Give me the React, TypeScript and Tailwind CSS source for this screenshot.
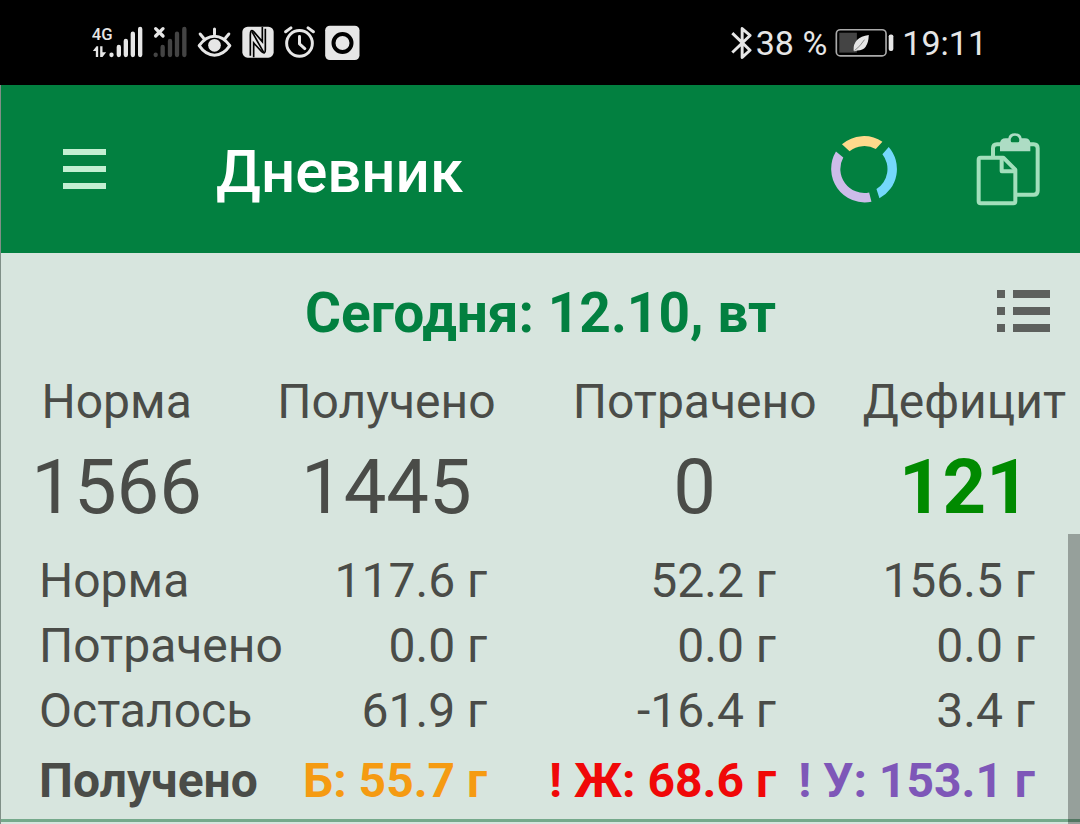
import type { ReactNode } from 'react';

const summary = [
  { label: 'Норма', value: '1566' },
  { label: 'Получено', value: '1445' },
  { label: 'Потрачено', value: '0' },
  { label: 'Дефицит', value: '121', highlight: true },
];

const rows = [
  { label: 'Норма', values: ['117.6 г', '52.2 г', '156.5 г'] },
  { label: 'Потрачено', values: ['0.0 г', '0.0 г', '0.0 г'] },
  { label: 'Осталось', values: ['61.9 г', '-16.4 г', '3.4 г'] },
];

export default function App() {
  return (
    <div className="flex min-h-screen flex-col bg-[#d7e5de] font-['Roboto',sans-serif] text-[#4a4c48]">
      <StatusBar />
      <div className="relative flex flex-1 flex-col border-l border-[#7f8f87]">
        <TopBar />
        <main className="flex-1">
          <div className="grid h-[120px] grid-cols-[1fr_auto_1fr] items-center">
            <h2 className="col-start-2 text-[55px] leading-none font-bold text-[#028040]">Сегодня: 12.10, вт</h2>
            <button type="button" aria-label="Список" className="mr-[30px] justify-self-end pb-1">
              <ListIcon />
            </button>
          </div>
          <Summary />
          <Nutrients />
        </main>
        {/* scroll thumb */}
        <div className="absolute top-[449px] right-0 bottom-0 w-3 bg-black/30" />
      </div>
    </div>
  );
}

function StatusBar() {
  return (
    <div className="flex h-[85px] items-center justify-between bg-black pr-[93px] pl-[92px] text-[34px] text-[#e6e6e6]">
      <div className="flex items-center gap-[10px]">
        <StatusIcon viewBox="38 30 152 108" className="w-[51px]">
          <text x="37" y="76" fontSize="50" fontWeight="500">4G</text>
          <path d="M40 108L51 94H56V126H49V108ZM62 94H69V112H80L69 126H62Z" />
          <path d="M96 119V120M118 96V120M139 78V120M160 56V120M182 42V120" stroke="currentColor" strokeWidth="13" strokeLinecap="round" />
        </StatusIcon>
        <StatusIcon viewBox="220 30 102 108" className="w-[34px]">
          <path d="M228 41L250 63M250 41L228 63" stroke="currentColor" strokeWidth="10" strokeLinecap="round" />
          <path d="M228 119V120M249 96V120M271 78V120M292 56V120M314 42V120" stroke="#444" strokeWidth="13" strokeLinecap="round" />
        </StatusIcon>
        <StatusIcon viewBox="353 30 104 108" className="w-[35px]">
          <g fill="none" stroke="currentColor" strokeWidth="9" strokeLinecap="round" strokeLinejoin="round">
            <path d="M359 92C385 54 425 54 451 92C425 130 385 130 359 92ZM405 42V58M362 57L372 69M448 57L438 69" />
          </g>
          <circle cx="405" cy="91" r="19" />
        </StatusIcon>
        <StatusIcon viewBox="487 30 96 108" className="w-[32px]">
          <rect x="488" y="35" width="94" height="93" rx="16" />
          <g fill="none" stroke="#000">
            <path d="M512 122V60Q512 40 522 50L548 80V36" strokeWidth="5" />
            <path d="M557 41V104Q557 120 546 110L522 84V127" strokeWidth="5" />
            <path d="M517 50L552 112" strokeWidth="5" />
          </g>
        </StatusIcon>
        <StatusIcon viewBox="613 30 94 108" className="w-[31px]">
          <g fill="none" stroke="currentColor" strokeWidth="9" strokeLinecap="round" strokeLinejoin="round">
            <circle cx="660" cy="85" r="39" />
            <path d="M660 64V87L676 101M618 50L634 38M702 50L686 38" />
          </g>
        </StatusIcon>
        <StatusIcon viewBox="735 30 104 108" className="w-[35px]">
          <rect x="735" y="32" width="103" height="103" rx="14" />
          <circle cx="787" cy="84" r="27" fill="none" stroke="#000" strokeWidth="12" />
        </StatusIcon>
      </div>
      <div className="flex items-center">
        <StatusIcon viewBox="34 27 64 108" className="w-[21px]">
          <path d="M38 51L92 103L68 125V37L92 58L38 110" fill="none" stroke="currentColor" strokeWidth="9" strokeLinejoin="round" />
        </StatusIcon>
        <span className="ml-1 pt-[2px]">38 %</span>
        <StatusIcon viewBox="350 29 178 108" className="ml-2 w-[59px]">
          <rect x="354" y="43" width="150" height="79" rx="12" fill="none" stroke="#aaa" strokeWidth="5" />
          <rect x="363" y="52" width="53" height="60" fill="#444" />
          <path d="M406 106Q404 66 452 59Q450 106 418 106L409 108Z" />
          <path d="M409 106Q426 93 439 73" fill="none" stroke="#888" strokeWidth="3" />
          <rect x="512" y="57" width="14" height="50" rx="6" />
        </StatusIcon>
        <span className="ml-2 pt-[2px]">19:11</span>
      </div>
    </div>
  );
}

function StatusIcon({ viewBox, className, children }: { viewBox: string; className: string; children: ReactNode }) {
  return (
    <svg viewBox={viewBox} className={`h-9 shrink-0 ${className}`} fill="currentColor" aria-hidden="true">
      {children}
    </svg>
  );
}

function TopBar() {
  return (
    <header className="flex h-[168px] items-center bg-[#028040] pr-10 pl-[62px]">
      <button type="button" aria-label="Меню" className="flex w-[43px] flex-col gap-[11px]">
        <span className="h-[6px] bg-[#c3efd2]" />
        <span className="h-[6px] bg-[#c3efd2]" />
        <span className="h-[6px] bg-[#c3efd2]" />
      </button>
      <h1 className="ml-[110px] flex-1 pt-[5px] text-[60px] font-medium text-white">Дневник</h1>
      <button type="button" aria-label="Диаграмма">
        <svg viewBox="30 44 208 208" className="size-[69px]">
          <path d="M66 72A101 101 0 0 1 188 64L168 86A72 72 0 0 0 89 93Z" fill="#ffd98c" />
          <path d="M207 80A101 101 0 0 1 179 235L170 207A72 72 0 0 0 188 102Z" fill="#74d8fb" />
          <path d="M155 245A101 101 0 0 1 48 94L70 112A72 72 0 0 0 148 217Z" fill="#cdbce9" />
        </svg>
      </button>
      <button type="button" aria-label="Буфер обмена" className="ml-[77px]">
        <svg viewBox="468 38 192 219" className="h-[73px] w-16" fill="none" stroke="#a3dfbc" strokeWidth="12" strokeLinejoin="round">
          <path d="M519 108V84Q519 72 531 72H641Q653 72 653 84V211Q653 223 641 223H590" />
          <path
            fillRule="evenodd"
            d="M540 93V68Q541 54 557 54H565Q567 39 585 39Q603 39 605 54H615Q630 54 631 68V93ZM585 46A13 13 0 1 0 585 72A13 13 0 1 0 585 46Z"
            fill="#addcc4"
            stroke="none"
          />
          <path d="M482 112H550L586 148V243Q586 249 580 249H482Q476 249 476 243V118Q476 112 482 112Z" />
          <path d="M545 112V153H586" />
        </svg>
      </button>
    </header>
  );
}

function ListIcon() {
  return (
    <svg viewBox="0 0 54 42" className="h-[42px] w-[54px]" fill="#5d605d" aria-hidden="true">
      <path d="M1 0h8v8H1zM17 0h37v8H17zM1 17h8v8H1zM17 17h37v8H17zM1 34h8v8H1zM17 34h37v8H17z" />
    </svg>
  );
}

function Summary() {
  return (
    <dl className="grid grid-cols-[3fr_4fr_4fr_3fr] text-center">
      {summary.map((item) => (
        <div key={item.label} className="flex min-w-0 flex-col items-center whitespace-nowrap">
          <dt className="text-[48px] leading-[58px]">{item.label}</dt>
          <dd className={`text-[76px] leading-[112px] ${item.highlight ? 'font-bold text-[#008a00]' : ''}`}>{item.value}</dd>
        </div>
      ))}
    </dl>
  );
}

function Nutrients() {
  return (
    <div className="mt-[5px] border-b-[3px] border-[#75a98b] pr-[45px] pl-[38px]">
      <table className="w-full table-fixed text-right text-[48px] leading-[65px] whitespace-nowrap">
        <colgroup>
          <col className="w-[25%]" />
          <col className="w-[20%]" />
          <col className="w-[29%]" />
          <col className="w-[26%]" />
        </colgroup>
        <tbody>
          {rows.map((row) => (
            <tr key={row.label}>
              <th scope="row" className="text-left font-normal">{row.label}</th>
              {row.values.map((value, i) => (
                <td key={i}>{value}</td>
              ))}
            </tr>
          ))}
          <tr className="leading-[76px] font-bold">
            <th scope="row" className="text-left">Получено</th>
            <td className="text-[#f59b12]">Б: 55.7 г</td>
            <td className="text-[#f00808]">! Ж: 68.6 г</td>
            <td className="text-[#7e57b8]">! У: 153.1 г</td>
          </tr>
        </tbody>
      </table>
    </div>
  );
}
